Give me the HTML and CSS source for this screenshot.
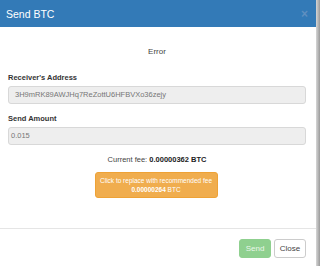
FILE: index.html
```html
<!DOCTYPE html>
<html lang="en">
<head>
  <meta charset="UTF-8">
  <title>Send BTC</title>
  <link rel="stylesheet" href="styles.css">
</head>
<body>
  <div class="page">
    <div class="modal">
      <div class="modal-header">
        <span class="modal-title">Send BTC</span>
        <span class="close-x">&times;</span>
      </div>
      <div class="modal-body">
        <p class="error">Error</p>
        <label class="field-label">Receiver's Address</label>
        <div class="field field-address">3H9mRK89AWJHq7ReZottU6HFBVXo36zejy</div>
        <label class="field-label">Send Amount</label>
        <div class="field">0.015</div>
        <p class="fee">Current fee: <b>0.00000362 BTC</b></p>
        <div class="fee-wrap">
          <button class="btn-warning">Click to replace with recommended fee<br><b>0.00000264</b> BTC</button>
        </div>
      </div>
      <div class="modal-footer">
        <button class="btn-send">Send</button>
        <button class="btn-close">Close</button>
      </div>
    </div>
    <div class="edge"></div>
  </div>
</body>
</html>
```

FILE: styles.css
```css
body {
  margin: 0;
  font-family: "Liberation Sans", Arial, sans-serif;
  color: #333;
  background: #fff;
}

.page {
  display: flex;
  height: 266px;
}

.modal {
  width: 316px;
  display: flex;
  flex-direction: column;
}

.edge {
  width: 4px;
  background: linear-gradient(to right, #d6d6d6, #9a9a9a);
}

.modal-header {
  background: #337ab7;
  height: 27px;
  display: flex;
  align-items: center;
  justify-content: space-between;
  padding: 0 8px 0 6px;
}

.modal-title {
  color: #fff;
  font-size: 10.5px;
}

.close-x {
  color: #5f8fc0;
  font-size: 12px;
  font-weight: bold;
}

.modal-body {
  padding: 0 10px 0 8px;
  height: 201px;
  border-bottom: 1px solid #e5e5e5;
}

.error {
  text-align: center;
  font-size: 8px;
  margin: 20px 0 17px;
  color: #444;
}

.field-label {
  display: block;
  font-size: 7.5px;
  font-weight: bold;
  margin-bottom: 4px;
  color: #333;
}

.field {
  height: 16px;
  line-height: 16px;
  background: #eee;
  border: 1px solid #d8d8d8;
  border-radius: 3px;
  padding: 0 6px 0 2px;
  font-size: 7.5px;
  color: #777;
  margin-bottom: 10px;
}

.field-address {
  padding-left: 6px;
}

.fee {
  text-align: center;
  font-size: 7.5px;
  margin: 10px 0 8px;
  color: #444;
}

.fee b {
  color: #222;
}

.fee-wrap {
  display: flex;
  justify-content: center;
}

.btn-warning {
  background: #f0ad4e;
  border: 1px solid #eea236;
  border-radius: 3px;
  color: #fff;
  font-family: inherit;
  font-size: 6.5px;
  line-height: 9px;
  width: 123px;
  height: 26px;
  padding: 0;
  margin-left: -2px;
}

.modal-footer {
  display: flex;
  justify-content: flex-end;
  gap: 3px;
  padding: 10px 10px 0 0;
}

.btn-send,
.btn-close {
  height: 19px;
  font-family: inherit;
  font-size: 8px;
  border-radius: 3px;
  padding: 0;
}

.btn-send {
  width: 32px;
  background: #8fd08f;
  border: 1px solid #8fd08f;
  color: #eaf7ea;
}

.btn-close {
  width: 32px;
  background: #fff;
  border: 1px solid #ccc;
  color: #444;
}
```
